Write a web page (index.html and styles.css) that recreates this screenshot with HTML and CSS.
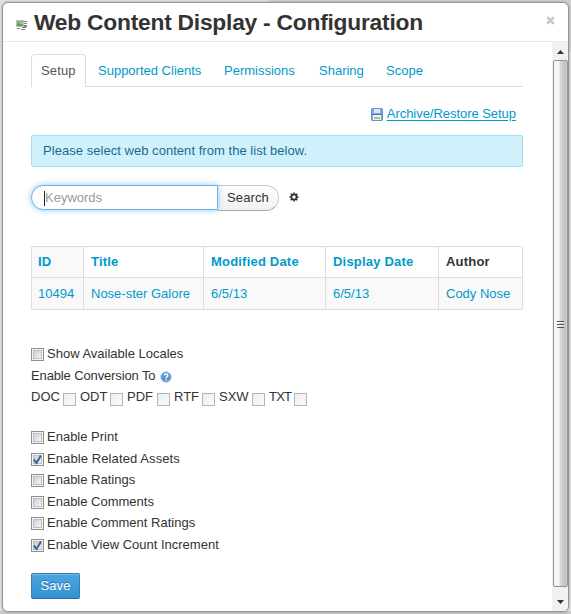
FILE: index.html
```html
<!DOCTYPE html>
<html lang="en">
<head>
<meta charset="utf-8">
<title>Web Content Display - Configuration</title>
<link rel="stylesheet" href="styles.css">
</head>
<body>
<div class="dialog">
  <header class="dialog-header">
    <svg class="portlet-icon" width="12" height="12" viewBox="0 0 12 12"><path d="M8 2h3v1H8zM8 4h3v1H8zM8 6h3v2H8zM6 8h4v1H6zM1 9h3v1H1zM5 10h4v1H5z" fill="#858585"/><path d="M0 1h8v7H0z" fill="#c9bda0"/><path d="M1 2h6v5H1z" fill="#4fc0dc"/><path d="M1 5l2-1 4 2v1H1z" fill="#4fae4e"/><path d="M4 3h3v2H4z" fill="#eeb13d"/></svg>
    <h1>Web Content Display - Configuration</h1>
    <svg class="close" width="9" height="9" viewBox="0 0 9 9"><path d="M1.2 1.2l6.6 6.6M7.8 1.2L1.2 7.8" stroke="#c6c6c6" stroke-width="2.4"/></svg>
  </header>
  <div class="dialog-body">
    <main class="content">
      <nav class="tabs">
        <a class="tab active">Setup</a><a class="tab t2">Supported Clients</a><a class="tab t3">Permissions</a><a class="tab t4">Sharing</a><a class="tab t5">Scope</a>
      </nav>
      <div class="archive">
        <svg width="12" height="13" viewBox="0 0 12 13"><rect x=".5" y=".5" width="11" height="12" rx=".7" fill="#7fa5e4" stroke="#6c8fd0"/><path d="M3 1h6v4H3z" fill="#dce8f8"/><path d="M1 6h10v1H1z" fill="#4a70b0"/><path d="M2 7h8v5H2z" fill="#f0f5ed"/><path d="M3 9h6v2H3z" fill="#9dcc72"/></svg>
        <a>Archive/Restore Setup</a>
      </div>
      <div class="alert">Please select web content from the list below.</div>
      <div class="search">
        <div class="field"><i></i><span>Keywords</span></div>
        <button class="search-button">Search</button>
        <svg width="10" height="10" viewBox="0 0 10 10"><circle cx="5" cy="5" r="2.6" fill="none" stroke="#333" stroke-width="1.8"/><path d="M5 .5v2M5 7.5v2M.5 5h2M7.5 5h2M1.7 1.7l1.3 1.3M7 7l1.3 1.3M8.3 1.7L7 3M3 7L1.7 8.3" stroke="#333" stroke-width="1.6"/></svg>
      </div>
      <table class="results">
        <colgroup><col class="c1"><col class="c2"><col class="c3"><col class="c4"><col class="c5"></colgroup>
        <thead><tr><th class="sorted">ID</th><th>Title</th><th>Modified Date</th><th>Display Date</th><th class="plain">Author</th></tr></thead>
        <tbody><tr><td>10494</td><td>Nose-ster Galore</td><td>6/5/13</td><td>6/5/13</td><td>Cody Nose</td></tr></tbody>
      </table>
      <div class="option locales"><b class="box"></b><span>Show Available Locales</span></div>
      <div class="conversion-label"><span>Enable Conversion To</span>
        <svg width="12" height="12" viewBox="0 0 12 12"><circle cx="6" cy="6" r="5.3" fill="#5d93ce" stroke="#b4cde8"/><path d="M4.3 4.6C4.3 2.5 7.8 2.5 7.8 4.5C7.8 5.8 6 5.7 6 7.2M6 8.2v1.3" fill="none" stroke="#fff" stroke-width="1.4"/></svg>
      </div>
      <div class="formats">
        <span>DOC</span><b class="box off"></b><span>ODT</span><b class="box off"></b><span>PDF</span><b class="box off"></b><span>RTF</span><b class="box off"></b><span>SXW</span><b class="box off"></b><span class="tight">TXT</span><b class="box off"></b>
      </div>
      <div class="options">
        <div class="option"><b class="box"></b><span>Enable Print</span></div>
        <div class="option"><b class="box"><svg viewBox="0 0 9 9"><path d="M1.5 4.5L3.7 7.3L7.3 1.2" /></svg></b><span class="loose">Enable Related Assets</span></div>
        <div class="option"><b class="box"></b><span>Enable Ratings</span></div>
        <div class="option"><b class="box"></b><span>Enable Comments</span></div>
        <div class="option"><b class="box"></b><span>Enable Comment Ratings</span></div>
        <div class="option"><b class="box"><svg viewBox="0 0 9 9"><path d="M1.5 4.5L3.7 7.3L7.3 1.2" /></svg></b><span>Enable View Count Increment</span></div>
      </div>
      <button class="save">Save</button>
    </main>
    <div class="scrollbar">
      <svg class="arrow" width="7" height="4" viewBox="0 0 7 4"><path d="M0 4L3.5 0L7 4z" fill="#333"/></svg>
      <div class="thumb"><svg width="7" height="8" viewBox="0 0 7 8"><path d="M0 1.5h7M0 4.5h7M0 7.5h7" stroke="#555"/><path d="M0 2.5h7M0 5.5h7" stroke="#fff" stroke-width=".7"/></svg></div>
      <svg class="arrow down" width="7" height="4" viewBox="0 0 7 4"><path d="M0 0L3.5 4L7 0z" fill="#333"/></svg>
    </div>
  </div>
</div>
</body>
</html>
```
FILE: styles.css
```css
* { box-sizing: border-box; }
body {
  margin: 0; width: 571px; height: 614px; padding: 2px; overflow: hidden;
  font: 13px/20px "Liberation Sans", Arial, sans-serif; letter-spacing: 0; color: #333;
  background: linear-gradient(#d0d0d0, #d0d0d0) 269px 0 / 302px 52px no-repeat, linear-gradient(#c8c8c8, #c8c8c8) 0 611px / 571px 3px no-repeat, #e5e5e5;
}
button { font: inherit; letter-spacing: .1px; margin: 0; padding: 0; }
.dialog { width: 567px; height: 610px; border: 1px solid #959595; border-radius: 6px; background: #fff; box-shadow: 0 0 3px #999; overflow: hidden; }
.dialog-header { height: 39px; border-bottom: 1px solid #eaeaea; display: flex; padding: 0 13px; }
.portlet-icon { margin: 16px 6px 0 0; }
.dialog-header h1 { margin: 0; font-size: 22.8px; line-height: 38px; letter-spacing: -.24px; white-space: nowrap; flex: 1; }
.close { margin: 13px 0 0; }
.dialog-body { display: flex; height: 569px; justify-content: space-between; }
.content { width: 520px; padding: 12px 0 0 28px; }
.tabs { display: flex; height: 33px; border-bottom: 1px solid #ddd; }
.tab { height: 32px; line-height: 33px; color: #009ac9; white-space: nowrap; }
.tab.active { width: 55px; height: 33px; padding-left: 9px; border: 1px solid #ddd; border-bottom: 0; border-radius: 4px 4px 0 0; background: #fff; color: #555; line-height: 32px; letter-spacing: .15px; }
.t2 { width: 126px; margin-left: 12px; }
.t3 { width: 95px; }
.t4 { width: 67px; }
.archive { height: 48px; padding: 17px 7px 0 0; display: flex; justify-content: flex-end; gap: 4px; color: #009ac9; letter-spacing: -.04px; }
.archive svg { margin-top: 4px; }
.archive a { text-decoration: underline; text-underline-offset: 2px; }
.alert { height: 32px; border: 1px solid #9de2f4; border-radius: 2px; background: #d0f1fb; color: #176c91; padding: 0 11px; line-height: 30px; letter-spacing: .04px; }
.search { display: flex; margin-top: 18px; height: 26px; align-items: flex-start; }
.field { width: 187px; height: 25px; border: 1px solid #6bb5ee; border-radius: 13px 0 0 13px; box-shadow: 0 0 6px #8bc5f2; padding: 5px 0 0 12px; display: flex; color: #999; line-height: 14px; background: #fff; z-index: 1; margin-right: -1px; }
.field i { width: 1px; height: 15px; background: #222; }
.search-button { width: 62px; height: 26px; border: 1px solid #c8c8c8; border-bottom-color: #aaa; border-radius: 0 13px 13px 0; background: linear-gradient(#fff, #f1f1f1); color: #333; }
.search > svg { margin: 7px 0 0 10px; }
.results { margin: 35px 0 0; width: 492px; height: 64px; border-collapse: separate; border-spacing: 0; border: 1px solid #ddd; border-left: 0; border-radius: 2px; table-layout: fixed; color: #009ac9; white-space: nowrap; }
.results th, .results td { text-align: left; padding: 0 0 0 7px; border-left: 1px solid #ddd; line-height: 20px; }
.results th:first-child, .results td:first-child { padding-left: 6px; }
.results th { height: 30px; letter-spacing: .2px; }
.results td { height: 32px; background: #f9f9f9; border-top: 1px solid #ddd; }
.results .sorted { background: #f9f9f9; }
.results .plain { color: #333; }
.c1 { width: 52px; } .c2 { width: 120px; } .c3 { width: 122px; } .c4 { width: 113px; } .c5 { width: 84px; }
.option { display: flex; gap: 3px; height: 21.6px; white-space: nowrap; }
.locales { margin-top: 34px; height: 22px; }
.box { flex: none; width: 13px; height: 13px; margin-top: 4px; border: 1px solid #8e8f8f; background: linear-gradient(135deg, #cbcfd5, #f5f5f5) 2px 2px / 7px 7px no-repeat, #f4f4f4; box-shadow: inset 0 0 0 1px #f4f4f4, inset 0 0 0 2px #bcc0c6; }
.box svg { display: block; width: 11px; height: 11px; }
.box path { fill: none; stroke: #4b619f; stroke-width: 1.7; }
.box.off { border-color: #b5b5b5; background: linear-gradient(135deg, #eee, #fafafa); box-shadow: none; margin: 6px 4px 0 0; }
.tight { letter-spacing: -.8px; }
.loose { letter-spacing: .1px; }
.conversion-label { display: flex; height: 21px; gap: 5px; letter-spacing: -.13px; }
.conversion-label svg { margin-top: 5px; }
.formats { display: grid; grid-template-columns: 32px 17px 30px 17px 30px 17px 28px 17px 33px 17px 25px 17px; height: 40px; }
.options { height: 146px; }
.save { display: block; width: 49px; height: 26px; border: 1px solid #3480b6; border-bottom-color: #286c9e; border-radius: 2px; background: linear-gradient(#4ba5df, #3491d2); color: #fff; box-shadow: inset 0 1px #70b9e7; text-shadow: 0 -1px #2b74a5; }
.scrollbar { width: 16px; padding: 8px 0 7px; background: #f1f1f1; display: flex; flex-direction: column; align-items: center; }
.thumb { width: 15px; height: 528px; margin: 6px 0 13px; border: 1px solid #929292; border-radius: 2px; background: linear-gradient(90deg, #f6f6f6 0 35%, #d6d6da 50%, #bfbfc6 88%, #ddd); display: flex; align-items: center; justify-content: center; }
```
